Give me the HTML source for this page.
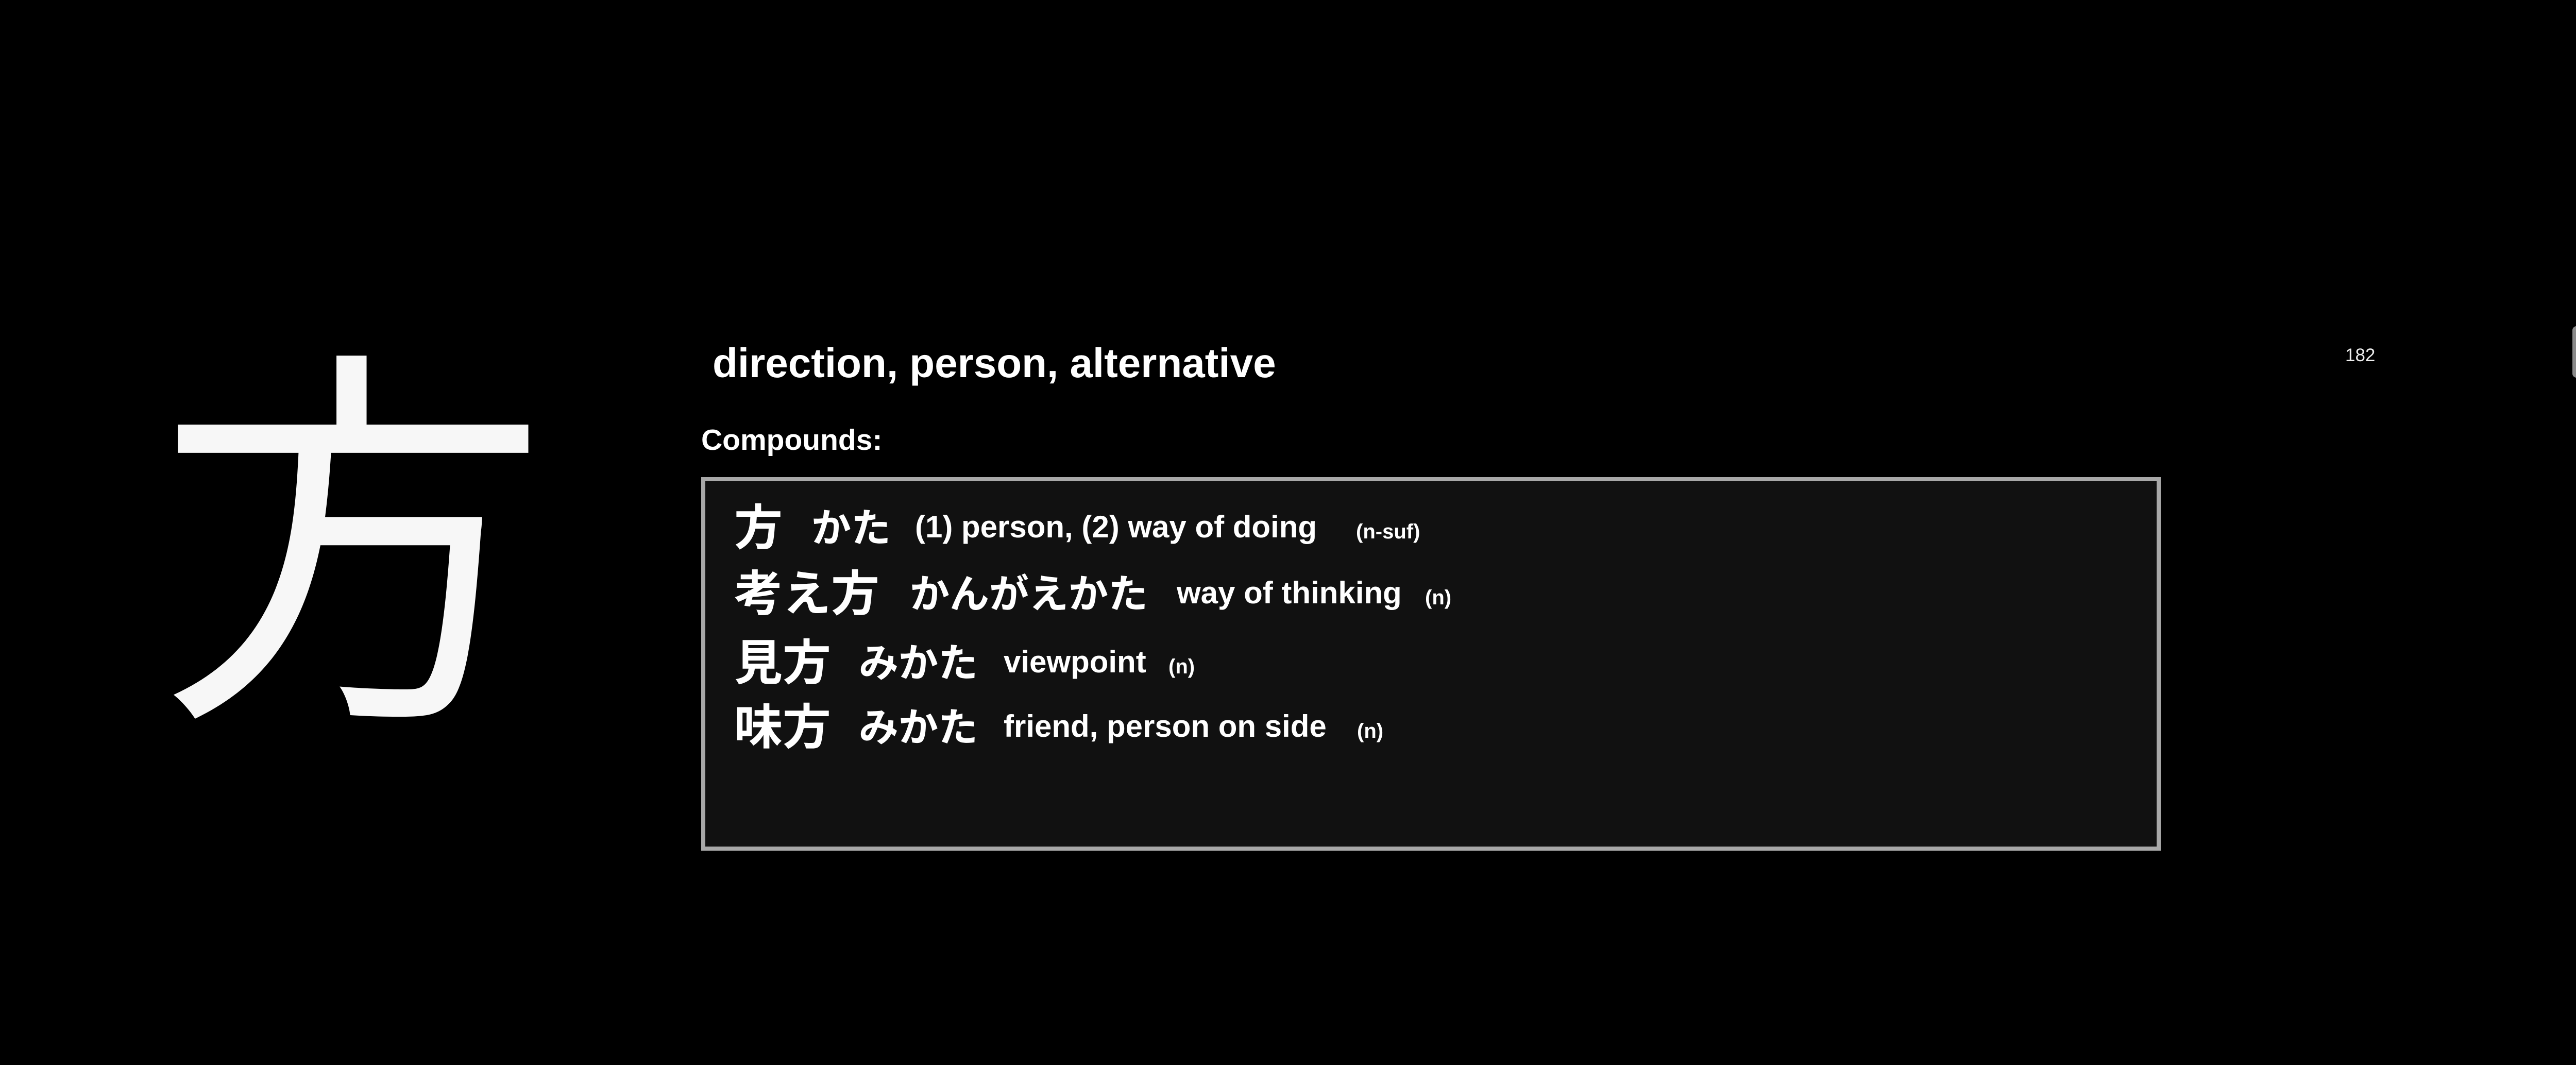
<!DOCTYPE html>
<html><head><meta charset="utf-8"><style>
html,body{margin:0;padding:0;background:#000;width:5008px;height:2067px;overflow:hidden;}
body{position:relative;font-family:"Liberation Sans","Noto Sans CJK JP",sans-serif;color:#fff;}
.a{position:absolute;white-space:nowrap;line-height:1;}
.big{font-family:"Noto Sans CJK JP",sans-serif;font-size:760px;left:305px;top:620px;color:#f7f7f7;}
.h{font-size:80px;left:1383px;top:665px;font-weight:bold;}
.c{font-size:57px;left:1361px;top:826px;font-weight:bold;}
.box{position:absolute;left:1361px;top:926px;width:2817px;height:709px;border:8px solid #a8a8a8;background:#111;}
.k{font-family:"Liberation Sans","Noto Sans CJK JP",sans-serif;font-size:94px;font-weight:bold;}
.r{font-family:"Liberation Sans","Noto Sans CJK JP",sans-serif;font-size:77px;font-weight:bold;}
.m{font-size:60px;font-weight:bold;}
.t{font-size:40px;font-weight:bold;}
.num{font-size:35px;left:4552px;top:672px;color:#eee;}
.sb{position:absolute;left:4993px;top:633px;width:20px;height:100px;border-radius:8px;background:#8a8a8a;}
</style></head><body>
<div class="a big">方</div>
<div class="a h">direction, person, alternative</div>
<div class="a c">Compounds:</div>
<div class="box"></div>
<div class="a k" style="left:1425px;top:978px">方</div>
<div class="a r" style="left:1575px;top:988px">かた</div>
<div class="a m" style="left:1776px;top:993px">(1) person, (2) way of doing</div>
<div class="a t" style="left:2632px;top:1012px">(n-suf)</div>

<div class="a k" style="left:1425px;top:1106px">考え方</div>
<div class="a r" style="left:1766px;top:1116px">かんがえかた</div>
<div class="a m" style="left:2284px;top:1121px">way of thinking</div>
<div class="a t" style="left:2766px;top:1140px">(n)</div>

<div class="a k" style="left:1425px;top:1240px">見方</div>
<div class="a r" style="left:1667px;top:1250px">みかた</div>
<div class="a m" style="left:1948px;top:1255px">viewpoint</div>
<div class="a t" style="left:2268px;top:1274px">(n)</div>

<div class="a k" style="left:1425px;top:1365px">味方</div>
<div class="a r" style="left:1667px;top:1375px">みかた</div>
<div class="a m" style="left:1948px;top:1380px">friend, person on side</div>
<div class="a t" style="left:2634px;top:1399px">(n)</div>

<div class="a num">182</div>
<div class="sb"></div>
</body></html>
